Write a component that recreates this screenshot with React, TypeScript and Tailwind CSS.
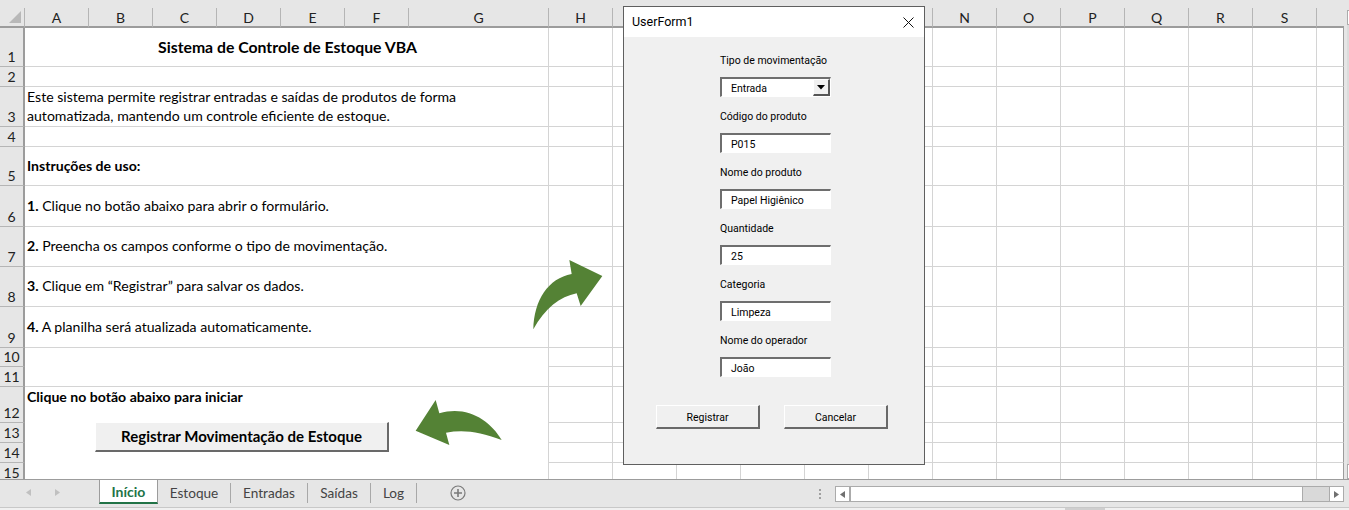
const colLetters = "ABCDEFGHIJKLMNOPQRST".split("");
const colWidths = [64, 64, 64, 64, 64, 64, 140, 64, 64, 64, 64, 64, 64, 64, 64, 64, 64, 64, 64, 27];
const rowHeights = [39, 20, 40, 20, 39, 41, 40, 40, 41, 19, 20, 36, 20, 20, 20];
const calibri = "font-['Lato','Liberation_Sans',sans-serif]";
const tahoma = "font-['Roboto','Liberation_Sans',sans-serif]";

type Merged = { row: number; span: number; content: React.ReactNode; className?: string };

const line1 = "text-[14.1px] leading-[19px] text-black whitespace-nowrap";

const merged: Merged[] = [
  { row: 1, span: 1, content: <b className="text-[15.8px]">Sistema de Controle de Estoque VBA</b>, className: "items-center justify-center pb-[2px]" },
  { row: 2, span: 1, content: null },
  {
    row: 3,
    span: 1,
    content: (
      <span>
        Este sistema permite registrar entradas e saídas de produtos de forma
        <br />
        automatizada, mantendo um controle eficiente de estoque.
      </span>
    ),
    className: "items-center pb-[1px]",
  },
  { row: 4, span: 1, content: null },
  { row: 5, span: 1, content: <b>Instruções de uso:</b>, className: "items-center pb-[2px]" },
  { row: 6, span: 1, content: <span><b>1.</b> Clique no botão abaixo para abrir o formulário.</span>, className: "items-center pb-[2px]" },
  { row: 7, span: 1, content: <span><b>2.</b> Preencha os campos conforme o tipo de movimentação.</span>, className: "items-center pb-[2px]" },
  { row: 8, span: 1, content: <span><b>3.</b> Clique em “Registrar” para salvar os dados.</span>, className: "items-center pb-[2px]" },
  { row: 9, span: 1, content: <span><b>4.</b> A planilha será atualizada automaticamente.</span>, className: "items-center pb-[2px]" },
  { row: 10, span: 2, content: null },
  {
    row: 12,
    span: 4,
    content: (
      <div className="flex flex-col w-full">
        <b>Clique no botão abaixo para iniciar</b>
        <div className="mt-[16px] ml-[68px] w-[294px] h-[30px] flex items-center justify-center bg-[#f0f0f0] border-t border-l border-t-white border-l-white border-b-2 border-r-2 border-b-[#696969] border-r-[#696969] text-[15px] font-bold">
          Registrar Movimentação de Estoque
        </div>
      </div>
    ),
    className: "items-start",
  },
];

function Sheet() {
  const cells: React.ReactNode[] = [];
  cells.push(
    <div key="corner" className="relative bg-[#e6e6e6] border-b-2 border-r border-b-[#9c9c9c] border-r-[#b5b5b5] overflow-hidden">
      <svg className="absolute right-[3px] bottom-[3px]" width="12" height="12" viewBox="0 0 12 12">
        <polygon points="12,0 12,12 0,12" fill="#b8b8b8" />
      </svg>
    </div>,
  );
  colLetters.forEach((c, i) => {
    cells.push(
      <div
        key={c}
        className={`flex items-center justify-center bg-[#e6e6e6] border-b-2 border-b-[#9c9c9c] text-[#222] text-[14px] ${
          i < colLetters.length - 1 ? "border-r border-r-[#b5b5b5]" : ""
        }`}
      >
        {i < colLetters.length - 1 ? c : ""}
      </div>,
    );
  });

  rowHeights.forEach((_, ri) => {
    const r = ri + 1;
    cells.push(
      <div
        key={`h${r}`}
        style={{ gridRow: r + 1, gridColumn: 1 }}
        className="flex items-end justify-center bg-[#e6e6e6] border-r-2 border-b border-r-[#9c9c9c] border-b-[#b5b5b5] text-[14px] leading-[18px] text-[#222]"
      >
        {r}
      </div>,
    );
    colWidths.forEach((_, ci) => {
      if (ci < 7) return;
      cells.push(
        <div
          key={`c${r}-${ci}`}
          style={{ gridRow: r + 1, gridColumn: ci + 2 }}
          className={`bg-white border-b border-b-[#d4d4d4] ${ci < colWidths.length - 1 ? "border-r border-r-[#d4d4d4]" : "border-r border-r-[#9c9c9c]"}`}
        />,
      );
    });
  });

  merged.forEach((m) => {
    cells.push(
      <div
        key={`m${m.row}`}
        style={{ gridRow: `${m.row + 1} / span ${m.span}`, gridColumn: "2 / span 7" }}
        className={`flex pl-[2px] bg-white border-b border-r border-b-[#d4d4d4] border-r-[#d4d4d4] overflow-hidden ${line1} ${m.className ?? ""}`}
      >
        {m.content}
      </div>,
    );
  });

  return (
    <div className="flex h-[471px]">
      <div
        className={`grid grid-cols-[25px_repeat(6,64px)_140px_repeat(12,64px)_27px] grid-rows-[20px_39px_20px_40px_20px_39px_41px_40px_40px_41px_19px_20px_36px_20px_20px_20px] h-[471px] overflow-hidden ${calibri}`}
      >
        {cells}
      </div>
      <div className="ml-[3px] flex-1 flex flex-col pt-[2px]">
        <div className="h-[15px] bg-white border border-[#ababab] border-r-0" />
        <div className="flex-1 bg-[#dcdcdc]" />
        <div className="h-[15px] bg-white border border-[#ababab] border-r-0" />
      </div>
    </div>
  );
}

function Field({ label, value, combo }: { label: string; value: string; combo?: boolean }) {
  return (
    <div className="flex flex-col">
      <div className="h-[36px] pt-[10px] text-[10.5px] leading-[20px] text-black">{label}</div>
      <div className="relative w-[111px] h-[20px] pt-[2px] bg-white border-t-2 border-l-2 border-t-[#6e6e6e] border-l-[#6e6e6e] border-b border-r border-b-white border-r-white flex items-center pl-[9px] text-[10.5px] text-black">
        {value}
        {combo && (
          <div className="absolute right-0 top-0 w-[17px] h-[17px] bg-[#f0f0f0] border-t border-l border-t-white border-l-white border-b-2 border-r-2 border-b-[#555] border-r-[#555] flex items-center justify-center">
            <svg width="8" height="5" viewBox="0 0 8 5">
              <polygon points="0,0 8,0 4,4.5" fill="#000" />
            </svg>
          </div>
        )}
      </div>
    </div>
  );
}

function FormButton({ label }: { label: string }) {
  return (
    <div className="w-[104px] h-[24px] pt-[3px] flex items-center justify-center bg-[#f0f0f0] border-t border-l border-t-white border-l-white border-b-2 border-r-2 border-b-[#696969] border-r-[#696969] text-[10.5px] text-black">
      {label}
    </div>
  );
}

function UserForm() {
  return (
    <div className={`absolute left-[623px] top-[6px] w-[302px] h-[459px] border border-[#5f5f5f] bg-[#f0f0f0] flex flex-col ${tahoma}`}>
      <div className="h-[30px] bg-white flex items-center justify-between pl-[8px] pr-[10px] text-[12.5px] text-black">
        <span>UserForm1</span>
        <svg width="11" height="11" viewBox="0 0 11 11" fill="none" stroke="#111" strokeWidth="1">
          <path d="M0.5 0.5L10.5 10.5M10.5 0.5L0.5 10.5" />
        </svg>
      </div>
      <div className="pl-[96px] pt-[4px] flex flex-col">
        <Field label="Tipo de movimentação" value="Entrada" combo />
        <Field label="Código do produto" value="P015" />
        <Field label="Nome do produto" value="Papel Higiênico" />
        <Field label="Quantidade" value="25" />
        <Field label="Categoria" value="Limpeza" />
        <Field label="Nome do operador" value="João" />
      </div>
      <div className="mt-[28px] ml-[32px] flex gap-[24px]">
        <FormButton label="Registrar" />
        <FormButton label="Cancelar" />
      </div>
    </div>
  );
}

function TabBar() {
  const tabs = [
    { label: "Estoque", w: "w-[73px]" },
    { label: "Entradas", w: "w-[77px]" },
    { label: "Saídas", w: "w-[63px]" },
    { label: "Log", w: "w-[46px]" },
  ];
  return (
    <div className={`h-[28px] flex bg-[#e6e6e6] border-t border-t-[#9c9c9c] text-[13.6px] ${calibri}`}>
      <div className="w-[99px] h-[25px] flex items-center">
        <svg className="ml-[26px]" width="5" height="7" viewBox="0 0 5 7"><polygon points="5,0 5,7 0,3.5" fill="#c0c0c0" /></svg>
        <svg className="ml-[24px]" width="5" height="7" viewBox="0 0 5 7"><polygon points="0,0 0,7 5,3.5" fill="#c0c0c0" /></svg>
      </div>
      <div className="w-[59px] h-[25px] -mt-px bg-white border-l border-r border-t border-[#9c9c9c] border-b-2 border-b-[#217346] flex items-center justify-center font-bold text-[#217346] text-[14px]">
        Início
      </div>
      {tabs.map((t) => (
        <div key={t.label} className={`${t.w} h-[20px] mt-[3px] flex items-center justify-center text-[#444] border-r border-r-[#a8a8a8]`}>
          {t.label}
        </div>
      ))}
      <div className="ml-[33px] h-[25px] flex items-center">
        <svg width="16" height="16" viewBox="0 0 16 16" fill="none" stroke="#7a7a7a" strokeWidth="1.2">
          <circle cx="8" cy="8" r="7" />
          <path d="M8 4v8M4 8h8" strokeWidth="1.6" />
        </svg>
      </div>
      <div className="ml-auto flex items-start pt-[6px] pr-[5px]">
        <div className="flex flex-col gap-[2px] mr-[14px] mt-[3px]">
          <span className="w-[2px] h-[2px] bg-[#a0a0a0]" />
          <span className="w-[2px] h-[2px] bg-[#a0a0a0]" />
          <span className="w-[2px] h-[2px] bg-[#a0a0a0]" />
        </div>
        <div className="w-[509px] h-[16px] flex bg-[#d9d9d9] border border-[#ababab]">
          <div className="w-[15px] bg-white border-r-2 border-r-[#ababab] flex items-center justify-center">
            <svg width="5" height="7" viewBox="0 0 5 7"><polygon points="5,0 5,7 0,3.5" fill="#707070" /></svg>
          </div>
          <div className="w-[452px] bg-white border-r border-r-[#ababab]" />
          <div className="flex-1" />
          <div className="w-[14px] bg-white border-l border-l-[#ababab] flex items-center justify-center">
            <svg width="5" height="7" viewBox="0 0 5 7"><polygon points="0,0 0,7 5,3.5" fill="#707070" /></svg>
          </div>
        </div>
      </div>
    </div>
  );
}

export default function App() {
  return (
    <div className="relative w-[1349px] h-[510px] overflow-hidden bg-[#e6e6e6]">
      <div className="h-[8px] bg-[#e6e6e6]" />
      <Sheet />
      <TabBar />
      <div className="h-[3px] bg-[#f0f0f0] border-t border-t-[#c8c8c8] flex pl-[1065px]">
        <div className="w-[40px] h-[2px] bg-[#cfcfcf]" />
      </div>
      <UserForm />
      <svg className="absolute left-[520px] top-[250px]" width="110" height="90" viewBox="0 0 330 270">
        <path d="M148 30L247 78L182 168L170 130C120 140 75 175 40 238C42 150 85 85 155 72Z" fill="#548235" />
      </svg>
      <svg className="absolute left-[400px] top-[390px]" width="120" height="60" viewBox="0 0 360 180">
        <path d="M107 30L47 122L148 165L138 128C190 118 240 125 305 150C270 90 200 45 118 70Z" fill="#548235" />
      </svg>
    </div>
  );
}
